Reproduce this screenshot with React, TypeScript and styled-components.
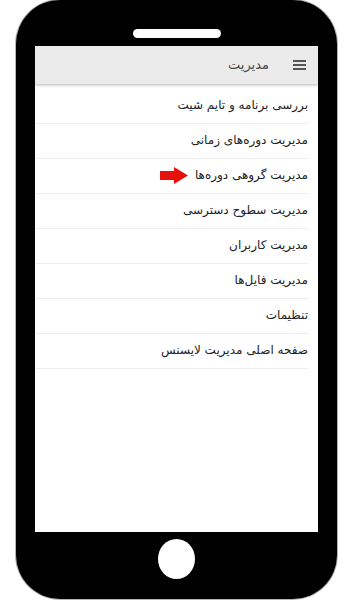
import React from 'react';
import styled, { createGlobalStyle } from 'styled-components';

const GlobalStyle = createGlobalStyle`
  html, body {
    margin: 0;
    padding: 0;
    background: #ffffff;
  }
  body {
    font-family: "DejaVu Sans", "Noto Sans", sans-serif;
  }
`;

const Page = styled.div`
  width: 361px;
  height: 600px;
  overflow: hidden;
`;

const Phone = styled.div`
  margin-left: 16px;
  width: 321px;
  height: 599px;
  background: #000;
  border-radius: 44px;
  box-shadow: 0 0 0 1px #b5b5b5;
  display: flex;
  flex-direction: column;
  align-items: center;
  padding-top: 29px;
  box-sizing: border-box;
`;

const Speaker = styled.div`
  width: 88px;
  height: 9px;
  border-radius: 5px;
  background: #fff;
`;

const Screen = styled.div`
  margin-top: 8px;
  width: 283px;
  height: 486px;
  background: #fff;
  display: flex;
  flex-direction: column;
  direction: rtl;
  overflow: hidden;
`;

const HomeButton = styled.div`
  margin-top: 7px;
  width: 37px;
  height: 40px;
  border-radius: 50%;
  background: #fff;
`;

const Header = styled.div`
  height: 38px;
  flex-shrink: 0;
  background: #ebebeb;
  box-shadow: 0 1px 3px rgba(0, 0, 0, 0.28);
  display: flex;
  align-items: center;
  padding-right: 12px;
  gap: 24px;
  position: relative;
  z-index: 1;
`;

const Burger = styled.div`
  width: 13px;
  display: flex;
  flex-direction: column;
  gap: 2px;

  span {
    height: 2px;
    background: #555;
  }
`;

const Title = styled.div`
  font-size: 13px;
  color: #4a4a4a;
  padding-bottom: 2px;
`;

const List = styled.div`
  padding-top: 5px;
  display: flex;
  flex-direction: column;
`;

const Row = styled.div`
  height: 35px;
  box-sizing: border-box;
  margin-right: 10px;
  border-bottom: 1px solid #ececec;
  display: flex;
  align-items: center;
  gap: 6px;
  font-size: 12px;
  color: #222;
  padding-bottom: 2px;
`;

const Arrow = () => (
  <svg width="29" height="17" viewBox="0 0 29 17">
    <path d="M0 4 H14 V0 L28 8.5 L14 17 V13 H0 Z" fill="#e8100d" />
  </svg>
);

const items = [
  'بررسی برنامه و تایم شیت',
  'مدیریت دوره‌های زمانی',
  'مدیریت گروهی دوره‌ها',
  'مدیریت سطوح دسترسی',
  'مدیریت کاربران',
  'مدیریت فایل‌ها',
  'تنظیمات',
  'صفحه اصلی مدیریت لایسنس',
];

const App = () => {
  return (
    <Page>
      <GlobalStyle />
      <Phone>
        <Speaker />
        <Screen>
          <Header>
            <Burger>
              <span />
              <span />
              <span />
            </Burger>
            <Title>مدیریت</Title>
          </Header>
          <List>
            {items.map((t, i) => (
              <Row key={t}>
                <span>{t}</span>
                {i === 2 && <Arrow />}
              </Row>
            ))}
          </List>
        </Screen>
        <HomeButton />
      </Phone>
    </Page>
  );
};

export default App;
